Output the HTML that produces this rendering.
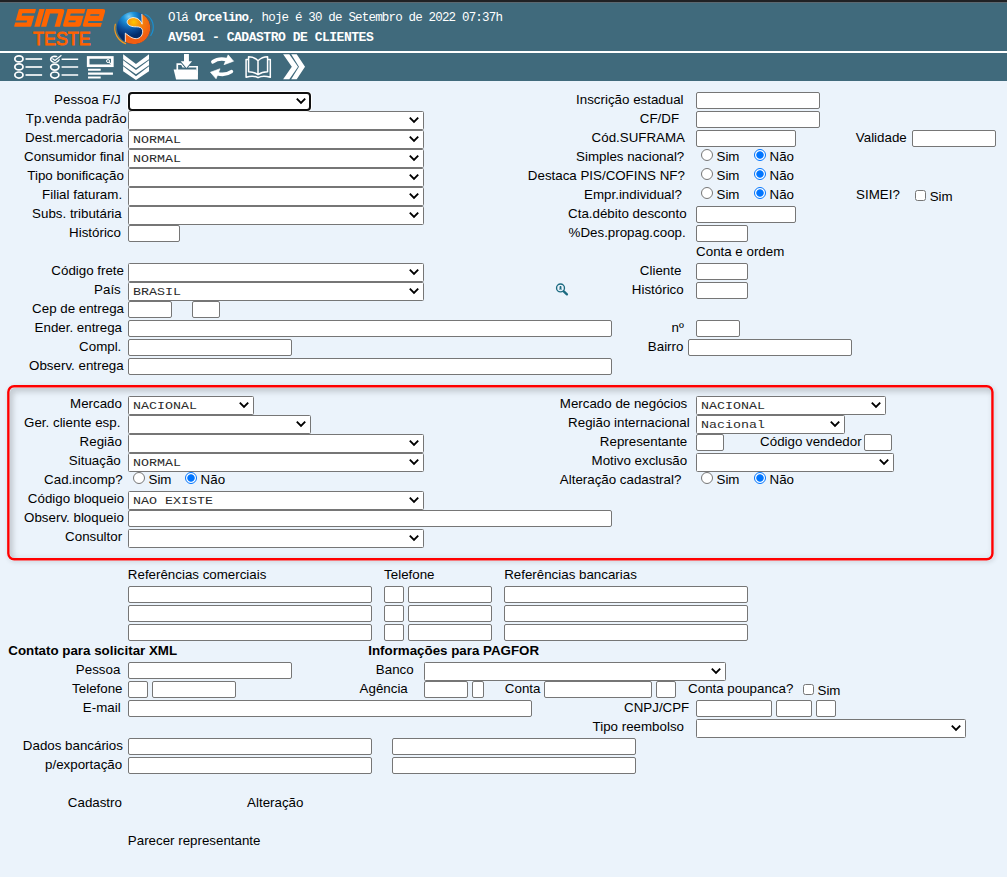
<!DOCTYPE html>
<html><head><meta charset="utf-8"><title>AV501 - CADASTRO DE CLIENTES</title>
<style>
html,body{margin:0;padding:0}
body{width:1007px;height:877px;overflow:hidden;position:relative;background:#ebf3fb;font-family:"Liberation Sans",sans-serif;font-size:13.333px;color:#000}
.hdr{position:absolute;left:0;top:0;width:1007px;height:81px;background:#406a7c}
.hdr .dk{position:absolute;left:0;top:0;width:1007px;height:3px;background:linear-gradient(#202124 0,#202124 2px,#5b6870 2px,#5b6870 3px)}
.hdr .wl{position:absolute;left:0;top:51px;width:1007px;height:2px;background:#fff}
.hdr svg{position:absolute;left:0;top:0}
.h1,.h2{position:absolute;left:168px;color:#fff;font-family:"Liberation Mono",monospace;white-space:nowrap}
.h1{top:10.5px;font-size:12.5px;letter-spacing:-0.82px;line-height:14px}
.h2{top:30px;font-size:13px;letter-spacing:-0.47px;line-height:15px;font-weight:bold}
.teste{position:absolute;left:32.9px;top:26.7px;color:#ff6200;font-size:18.6px;line-height:24px;transform-origin:0 0;transform:scaleX(0.963);-webkit-text-stroke:0.85px #ff6200;white-space:nowrap}
.t{position:absolute;white-space:nowrap;line-height:15px;height:15px}
.b{font-weight:bold}
.i{position:absolute;box-sizing:border-box;height:17px;border:1px solid #767676;border-radius:2px;background:#fff}
.s{position:absolute;box-sizing:border-box;height:19px;border:1px solid #767676;border-radius:1.5px;background:#fff;font-family:"Liberation Mono",monospace;font-size:11.7px;line-height:18px;padding-left:4px;color:#2a2a2a;white-space:nowrap;overflow:hidden}
.s span{display:inline-block;transform-origin:0 50%;transform:scaleX(1.14)}
.s .cv{position:absolute;right:3px;top:3.5px;width:12px;height:8px}
.s.f{border:2px solid #101010;border-radius:4px;box-shadow:0 0 0 1px rgba(255,255,255,.9)}
.s.f .cv{right:2px;top:2.5px}
.r{position:absolute;box-sizing:border-box;width:12px;height:12px;border:1px solid #767676;border-radius:50%;background:#fff}
.r.c{border-color:#0075ff;background:radial-gradient(circle,#0075ff 0,#0075ff 3.3px,#fff 4.1px)}
.cb{position:absolute;box-sizing:border-box;width:11.4px;height:11.4px;border:1px solid #767676;border-radius:2.5px;background:#fff}
.red{position:absolute;left:7px;top:385px;width:987px;height:175.5px;border-radius:7px;box-shadow:1px 1px 5px rgba(0,0,0,.12)}
.redin{position:absolute;left:9.5px;top:387.5px;width:982px;height:170.5px;border-radius:4.5px;box-shadow:inset 4px 5px 5px rgba(0,0,0,.115),inset 0 0 6px rgba(0,0,0,.09)}
.redsvg{position:absolute;left:0;top:380px}
.mag{position:absolute;left:548px;top:278px}
</style></head><body>
<div class="hdr"><div class="dk"></div><div class="wl"></div>
<svg width="1007" height="81" viewBox="0 0 1007 81">
<defs>
<radialGradient id="gb" cx="400" cy="240" r="470" gradientUnits="userSpaceOnUse"><stop offset="0" stop-color="#7ccbf2"/><stop offset="0.22" stop-color="#1d95dc"/><stop offset="0.55" stop-color="#0b4f9c"/><stop offset="0.8" stop-color="#032c6a"/><stop offset="1" stop-color="#032a66"/></radialGradient>
<radialGradient id="go" cx="490" cy="345" r="330" gradientUnits="userSpaceOnUse"><stop offset="0" stop-color="#ffc800"/><stop offset="0.3" stop-color="#f9980a"/><stop offset="0.6" stop-color="#f4780e"/><stop offset="1" stop-color="#f15e12"/></radialGradient>
</defs>
<!-- SINGE -->
<g transform="translate(0,26.85) skewX(-15.6)" fill="#ff6400">
<rect x="14" y="-17.9" width="17.1" height="17.9" rx="0.8"/>
<rect x="34.3" y="-17.9" width="5.4" height="17.9"/>
<path d="M41.04,0 V-17.9 H57 Q59.96,-17.9 59.96,-14.9 V0 H54.55 V-13.4 H46.3 V0 Z"/>
<path d="M62.5,-2 V-17.9 H80.4 V-2 Q80.4,0 78.4,0 H64.5 Q62.5,0 62.5,-2 Z"/>
<path d="M82.3,-2 V-17.9 H97.8 Q100.8,-17.9 100.8,-14.9 V0 H84.3 Q82.3,0 82.3,-2 Z"/>
<g fill="#406a7c">
<rect x="18.5" y="-13.6" width="14.5" height="2.5"/>
<rect x="12" y="-6.45" width="13.4" height="2"/>
<rect x="67" y="-13.45" width="15" height="2.25"/>
<rect x="67" y="-6.45" width="7" height="1.75"/>
<rect x="87" y="-12.65" width="8.9" height="1.5"/>
<rect x="86.9" y="-5.95" width="16" height="2"/>
</g></g>
<!-- globe -->
<g transform="translate(108,4) scale(0.05247)">
<ellipse cx="488" cy="455" rx="318" ry="306" fill="url(#gb)"/>
<path d="M645,190 A318,306 0 0 1 330,722 L330,555 C400,610 470,665 540,660 C620,655 665,590 660,510 C655,450 600,435 540,435 C460,435 380,420 365,350 C360,290 440,255 500,260 C580,265 630,330 650,385 Z" fill="url(#go)"/>
<path d="M330,722 L330,555 C400,610 470,665 540,660 C620,655 665,590 660,510 C655,450 600,435 540,435 C460,435 380,420 365,350 C360,290 440,255 500,260 C580,265 630,330 650,385 L645,190" fill="none" stroke="#fff" stroke-width="16" stroke-opacity="1" stroke-linejoin="round"/>
<path d="M140,385 C95,540 190,700 335,755" fill="none" stroke="#f79a1a" stroke-width="22" stroke-linecap="round"/>
<path d="M705,195 C860,260 910,450 815,600" fill="none" stroke="#1a8fd0" stroke-width="22" stroke-linecap="round"/>
</g>
<!-- toolbar icons -->
<g fill="none" stroke="#fff">
<g transform="translate(8,52) scale(0.07547)">
<g stroke-width="23"><ellipse cx="145" cy="92" rx="54" ry="40"/><ellipse cx="145" cy="198" rx="54" ry="40"/><ellipse cx="145" cy="305" rx="54" ry="40"/></g>
<g stroke-width="27" stroke-opacity="0.82"><path d="M232,92H452M232,198H452M232,305H452"/></g>
<g stroke-width="23"><ellipse cx="620" cy="96" rx="54" ry="39"/><ellipse cx="620" cy="200" rx="54" ry="40"/><ellipse cx="620" cy="305" rx="54" ry="40"/></g>
<path d="M588,86L622,112L708,44" stroke="#406a7c" stroke-width="42"/>
<g stroke-width="20"><path d="M710,95H930M710,200H930M710,305H930"/><path d="M588,86L622,112L708,44" stroke-width="17"/></g>
</g>
<g transform="translate(82,52) scale(0.07547)">
<rect x="82" y="72" width="320" height="110" stroke-width="35"/>
<circle cx="345" cy="120" r="20" stroke-width="13"/><path d="M360,135L385,160" stroke-width="14"/>
<path d="M80,236H248M80,287H410M80,338H248" stroke-width="28"/>
<g fill="#fff" stroke="none">
<path d="M545,30L715,160L888,30V95L715,215L545,95Z"/>
<path d="M545,110L715,240L888,110V175L715,295L545,175Z"/>
<path d="M545,190L715,320L888,190V255L715,372L545,255Z"/>
</g></g>
<g transform="translate(164,52) scale(0.07547)">
<path d="M176,240V161H236L252,196H439V300" stroke-width="22"/>
<path d="M265,25H330V122H372L297,212L222,122H265Z" fill="#fff" stroke="#406a7c" stroke-width="26" paint-order="stroke"/>
<path d="M128,232H428L450,290V365H160Z" fill="#fff" stroke="none"/>
<path d="M648,130Q725,74 835,102" stroke-width="48" stroke-linecap="round"/>
<path d="M850,38L922,122L795,168Z" fill="#fff" stroke="#fff" stroke-width="8" stroke-linejoin="round"/>
<path d="M893,260Q815,316 708,288" stroke-width="48" stroke-linecap="round"/>
<path d="M690,355L615,268L742,222Z" fill="#fff" stroke="#fff" stroke-width="8" stroke-linejoin="round"/>
</g>
<g transform="translate(238,52) scale(0.07547)">
<g stroke-width="20" stroke-linejoin="round">
<path d="M265,115C230,80 185,62 140,62V262C185,262 230,275 265,300C300,275 345,262 392,262V62C345,62 300,80 265,115V300"/>
<path d="M140,100H107V335C170,315 230,320 265,340C300,320 365,315 428,335V100H392"/>
</g>
<g fill="#fff" stroke="none">
<path d="M598,30H680L795,195L680,362H598L713,195Z"/>
<path d="M705,30H778L888,195L778,362H705L808,195Z"/>
</g></g>
</g>
</svg>
<div class="teste">TESTE</div>
<div class="h1">Olá <b>Orcelino</b>, hoje é 30 de Setembro de 2022 07:37h</div>
<div class="h2">AV501 - CADASTRO DE CLIENTES</div>
</div>
<div class="red"></div><div class="redin"></div><svg class="redsvg" width="1007" height="190" viewBox="0 380 1007 190"><rect x="8.35" y="386.25" width="984.1" height="173" rx="5.75" fill="none" stroke="#ff0000" stroke-width="2.4"/></svg>
<svg class="mag" width="30" height="24" viewBox="0 0 1007 806"><circle cx="420" cy="335" r="133" fill="none" stroke="#1b6a80" stroke-width="46"/><path d="M530,450L635,550" stroke="#1b6a80" stroke-width="78" stroke-linecap="round"/><path d="M420,268c26,0 36,22 34,46c-2,14 -8,22 -8,30c0,10 24,12 24,40h-100c0,-28 24,-30 24,-40c0,-8 -6,-16 -8,-30c-2,-24 8,-46 34,-46z" fill="#1b6a80"/></svg>
<div class="t" style="left:54.10px;top:92px">Pessoa F/J</div>
<div class="t" style="left:25.85px;top:111px">Tp.venda padrão</div>
<div class="t" style="left:25.10px;top:130px">Dest.mercadoria</div>
<div class="t" style="left:24.10px;top:149px">Consumidor final</div>
<div class="t" style="left:27.30px;top:168px">Tipo bonificação</div>
<div class="t" style="left:42.10px;top:187px">Filial faturam.</div>
<div class="t" style="left:32.10px;top:206px">Subs. tributária</div>
<div class="t" style="left:69.10px;top:225px">Histórico</div>
<div class="t" style="left:51.35px;top:263px">Código frete</div>
<div class="t" style="left:94.10px;top:282px">País</div>
<div class="t" style="left:32.10px;top:301px">Cep de entrega</div>
<div class="t" style="left:34.60px;top:320px">Ender. entrega</div>
<div class="t" style="left:79.10px;top:339px">Compl.</div>
<div class="t" style="left:29.10px;top:358px">Observ. entrega</div>
<div class="t" style="left:70.10px;top:396px">Mercado</div>
<div class="t" style="left:24.10px;top:415px">Ger. cliente esp.</div>
<div class="t" style="left:79.60px;top:434px">Região</div>
<div class="t" style="left:68.85px;top:453px">Situação</div>
<div class="t" style="left:44.10px;top:472px">Cad.incomp?</div>
<div class="t" style="left:27.85px;top:491px">Código bloqueio</div>
<div class="t" style="left:24.10px;top:510px">Observ. bloqueio</div>
<div class="t" style="left:65.10px;top:529px">Consultor</div>
<div class="t" style="left:127.85px;top:567px">Referências comerciais</div>
<div class="t" style="left:384.10px;top:567px">Telefone</div>
<div class="t" style="left:504.20px;top:567px">Referências bancarias</div>
<div class="t" style="left:75.85px;top:662px">Pessoa</div>
<div class="t" style="left:72.10px;top:681px">Telefone</div>
<div class="t" style="left:82.85px;top:700px">E-mail</div>
<div class="t" style="left:375.85px;top:662px">Banco</div>
<div class="t" style="left:359.60px;top:681px">Agência</div>
<div class="t" style="left:504.85px;top:681px">Conta</div>
<div class="t" style="left:688.10px;top:681px">Conta poupanca?</div>
<div class="t" style="left:624.10px;top:700px">CNPJ/CPF</div>
<div class="t" style="left:592.60px;top:719px">Tipo reembolso</div>
<div class="t" style="left:22.85px;top:738px">Dados bancários</div>
<div class="t" style="left:45.10px;top:757px">p/exportação</div>
<div class="t" style="left:67.85px;top:795px">Cadastro</div>
<div class="t" style="left:247.10px;top:795px">Alteração</div>
<div class="t" style="left:127.85px;top:833px">Parecer representante</div>
<div class="t" style="left:576.10px;top:92px">Inscrição estadual</div>
<div class="t" style="left:639.85px;top:111px">CF/DF</div>
<div class="t" style="left:591.60px;top:130px">Cód.SUFRAMA</div>
<div class="t" style="left:855.85px;top:130px">Validade</div>
<div class="t" style="left:576.10px;top:149px">Simples nacional?</div>
<div class="t" style="left:527.85px;top:168px">Destaca PIS/COFINS NF?</div>
<div class="t" style="left:584.10px;top:187px">Empr.individual?</div>
<div class="t" style="left:856.10px;top:187px">SIMEI?</div>
<div class="t" style="left:568.10px;top:206px">Cta.débito desconto</div>
<div class="t" style="left:568.60px;top:225px">%Des.propag.coop.</div>
<div class="t" style="left:696.10px;top:244px">Conta e ordem</div>
<div class="t" style="left:639.85px;top:263px">Cliente</div>
<div class="t" style="left:631.85px;top:282px">Histórico</div>
<div class="t" style="left:671.60px;top:320px">nº</div>
<div class="t" style="left:647.85px;top:339px">Bairro</div>
<div class="t" style="left:559.85px;top:396px">Mercado de negócios</div>
<div class="t" style="left:568.10px;top:415px">Região internacional</div>
<div class="t" style="left:599.85px;top:434px">Representante</div>
<div class="t" style="left:760.10px;top:434px">Código vendedor</div>
<div class="t" style="left:591.60px;top:453px">Motivo exclusão</div>
<div class="t" style="left:559.85px;top:472px">Alteração cadastral?</div>
<div class="t" style="left:716.50px;top:149px">Sim</div>
<div class="t" style="left:769.50px;top:149px">Não</div>
<div class="t" style="left:716.50px;top:168px">Sim</div>
<div class="t" style="left:769.50px;top:168px">Não</div>
<div class="t" style="left:716.50px;top:187px">Sim</div>
<div class="t" style="left:769.50px;top:187px">Não</div>
<div class="t" style="left:716.50px;top:472px">Sim</div>
<div class="t" style="left:769.50px;top:472px">Não</div>
<div class="t" style="left:148.50px;top:472px">Sim</div>
<div class="t" style="left:200.60px;top:472px">Não</div>
<div class="t b" style="left:8.25px;top:643px">Contato para solicitar XML</div>
<div class="t b" style="left:368.25px;top:643px">Informações para PAGFOR</div>
<div class="t" style="left:929.70px;top:189px">Sim</div>
<div class="t" style="left:817.50px;top:683px">Sim</div>
<div class="cb" style="left:914.5px;top:189.5px"></div>
<div class="cb" style="left:802.7px;top:683.7px"></div>
<div class="i" style="left:128px;top:225px;width:52px"></div>
<div class="i" style="left:128px;top:301px;width:44px"></div>
<div class="i" style="left:192px;top:301px;width:28px"></div>
<div class="i" style="left:128px;top:320px;width:484px"></div>
<div class="i" style="left:128px;top:339px;width:164px"></div>
<div class="i" style="left:128px;top:358px;width:484px"></div>
<div class="i" style="left:128px;top:510px;width:484px"></div>
<div class="i" style="left:128px;top:586px;width:244px"></div>
<div class="i" style="left:128px;top:605px;width:244px"></div>
<div class="i" style="left:128px;top:624px;width:244px"></div>
<div class="i" style="left:384px;top:586px;width:20px"></div>
<div class="i" style="left:384px;top:605px;width:20px"></div>
<div class="i" style="left:384px;top:624px;width:20px"></div>
<div class="i" style="left:408px;top:586px;width:84px"></div>
<div class="i" style="left:408px;top:605px;width:84px"></div>
<div class="i" style="left:408px;top:624px;width:84px"></div>
<div class="i" style="left:504px;top:586px;width:244px"></div>
<div class="i" style="left:504px;top:605px;width:244px"></div>
<div class="i" style="left:504px;top:624px;width:244px"></div>
<div class="i" style="left:128px;top:662px;width:164px"></div>
<div class="i" style="left:128px;top:681px;width:20px"></div>
<div class="i" style="left:152px;top:681px;width:84px"></div>
<div class="i" style="left:128px;top:700px;width:404px"></div>
<div class="i" style="left:424px;top:681px;width:44px"></div>
<div class="i" style="left:472px;top:681px;width:12px"></div>
<div class="i" style="left:544px;top:681px;width:108px"></div>
<div class="i" style="left:656px;top:681px;width:20px"></div>
<div class="i" style="left:696px;top:700px;width:76px"></div>
<div class="i" style="left:776px;top:700px;width:36px"></div>
<div class="i" style="left:816px;top:700px;width:20px"></div>
<div class="i" style="left:128px;top:738px;width:244px"></div>
<div class="i" style="left:392px;top:738px;width:244px"></div>
<div class="i" style="left:128px;top:757px;width:244px"></div>
<div class="i" style="left:392px;top:757px;width:244px"></div>
<div class="i" style="left:696px;top:92px;width:124px"></div>
<div class="i" style="left:696px;top:111px;width:124px"></div>
<div class="i" style="left:696px;top:130px;width:100px"></div>
<div class="i" style="left:912px;top:130px;width:84px"></div>
<div class="i" style="left:696px;top:206px;width:100px"></div>
<div class="i" style="left:696px;top:225px;width:52px"></div>
<div class="i" style="left:696px;top:263px;width:52px"></div>
<div class="i" style="left:696px;top:282px;width:52px"></div>
<div class="i" style="left:696px;top:320px;width:44px"></div>
<div class="i" style="left:688px;top:339px;width:164px"></div>
<div class="i" style="left:696px;top:434px;width:28px"></div>
<div class="i" style="left:864px;top:434px;width:28px"></div>
<div class="s" style="left:128px;top:111px;width:296px"><svg class="cv" viewBox="-6 -4 12 8"><path d="M-4.2,-2.3 L0,1.9 L4.2,-2.3" fill="none" stroke="#000" stroke-width="1.9"/></svg></div>
<div class="s" style="left:128px;top:130px;width:296px"><span>NORMAL</span><svg class="cv" viewBox="-6 -4 12 8"><path d="M-4.2,-2.3 L0,1.9 L4.2,-2.3" fill="none" stroke="#000" stroke-width="1.9"/></svg></div>
<div class="s" style="left:128px;top:149px;width:296px"><span>NORMAL</span><svg class="cv" viewBox="-6 -4 12 8"><path d="M-4.2,-2.3 L0,1.9 L4.2,-2.3" fill="none" stroke="#000" stroke-width="1.9"/></svg></div>
<div class="s" style="left:128px;top:168px;width:296px"><svg class="cv" viewBox="-6 -4 12 8"><path d="M-4.2,-2.3 L0,1.9 L4.2,-2.3" fill="none" stroke="#000" stroke-width="1.9"/></svg></div>
<div class="s" style="left:128px;top:187px;width:296px"><svg class="cv" viewBox="-6 -4 12 8"><path d="M-4.2,-2.3 L0,1.9 L4.2,-2.3" fill="none" stroke="#000" stroke-width="1.9"/></svg></div>
<div class="s" style="left:128px;top:206px;width:296px"><svg class="cv" viewBox="-6 -4 12 8"><path d="M-4.2,-2.3 L0,1.9 L4.2,-2.3" fill="none" stroke="#000" stroke-width="1.9"/></svg></div>
<div class="s" style="left:128px;top:263px;width:296px"><svg class="cv" viewBox="-6 -4 12 8"><path d="M-4.2,-2.3 L0,1.9 L4.2,-2.3" fill="none" stroke="#000" stroke-width="1.9"/></svg></div>
<div class="s" style="left:128px;top:282px;width:296px"><span>BRASIL</span><svg class="cv" viewBox="-6 -4 12 8"><path d="M-4.2,-2.3 L0,1.9 L4.2,-2.3" fill="none" stroke="#000" stroke-width="1.9"/></svg></div>
<div class="s" style="left:128px;top:396px;width:126px"><span>NACIONAL</span><svg class="cv" viewBox="-6 -4 12 8"><path d="M-4.2,-2.3 L0,1.9 L4.2,-2.3" fill="none" stroke="#000" stroke-width="1.9"/></svg></div>
<div class="s" style="left:128px;top:415px;width:183px"><svg class="cv" viewBox="-6 -4 12 8"><path d="M-4.2,-2.3 L0,1.9 L4.2,-2.3" fill="none" stroke="#000" stroke-width="1.9"/></svg></div>
<div class="s" style="left:128px;top:434px;width:296px"><svg class="cv" viewBox="-6 -4 12 8"><path d="M-4.2,-2.3 L0,1.9 L4.2,-2.3" fill="none" stroke="#000" stroke-width="1.9"/></svg></div>
<div class="s" style="left:128px;top:453px;width:296px"><span>NORMAL</span><svg class="cv" viewBox="-6 -4 12 8"><path d="M-4.2,-2.3 L0,1.9 L4.2,-2.3" fill="none" stroke="#000" stroke-width="1.9"/></svg></div>
<div class="s" style="left:128px;top:491px;width:296px"><span>NAO EXISTE</span><svg class="cv" viewBox="-6 -4 12 8"><path d="M-4.2,-2.3 L0,1.9 L4.2,-2.3" fill="none" stroke="#000" stroke-width="1.9"/></svg></div>
<div class="s" style="left:128px;top:529px;width:296px"><svg class="cv" viewBox="-6 -4 12 8"><path d="M-4.2,-2.3 L0,1.9 L4.2,-2.3" fill="none" stroke="#000" stroke-width="1.9"/></svg></div>
<div class="s" style="left:696px;top:396px;width:190px"><span>NACIONAL</span><svg class="cv" viewBox="-6 -4 12 8"><path d="M-4.2,-2.3 L0,1.9 L4.2,-2.3" fill="none" stroke="#000" stroke-width="1.9"/></svg></div>
<div class="s" style="left:696px;top:415px;width:149px"><span>Nacional</span><svg class="cv" viewBox="-6 -4 12 8"><path d="M-4.2,-2.3 L0,1.9 L4.2,-2.3" fill="none" stroke="#000" stroke-width="1.9"/></svg></div>
<div class="s" style="left:696px;top:453px;width:198px"><svg class="cv" viewBox="-6 -4 12 8"><path d="M-4.2,-2.3 L0,1.9 L4.2,-2.3" fill="none" stroke="#000" stroke-width="1.9"/></svg></div>
<div class="s" style="left:424px;top:662px;width:302px"><svg class="cv" viewBox="-6 -4 12 8"><path d="M-4.2,-2.3 L0,1.9 L4.2,-2.3" fill="none" stroke="#000" stroke-width="1.9"/></svg></div>
<div class="s" style="left:696px;top:719px;width:270px"><svg class="cv" viewBox="-6 -4 12 8"><path d="M-4.2,-2.3 L0,1.9 L4.2,-2.3" fill="none" stroke="#000" stroke-width="1.9"/></svg></div>
<div class="s f" style="left:128px;top:92px;width:183px"><svg class="cv" viewBox="-6 -4 12 8"><path d="M-4.2,-2.3 L0,1.9 L4.2,-2.3" fill="none" stroke="#000" stroke-width="1.9"/></svg></div>
<div class="r" style="left:701px;top:149px"></div>
<div class="r c" style="left:754px;top:149px"></div>
<div class="r" style="left:701px;top:168px"></div>
<div class="r c" style="left:754px;top:168px"></div>
<div class="r" style="left:701px;top:187px"></div>
<div class="r c" style="left:754px;top:187px"></div>
<div class="r" style="left:701px;top:472px"></div>
<div class="r c" style="left:754px;top:472px"></div>
<div class="r" style="left:133px;top:472px"></div>
<div class="r c" style="left:185px;top:472px"></div>
</body></html>
